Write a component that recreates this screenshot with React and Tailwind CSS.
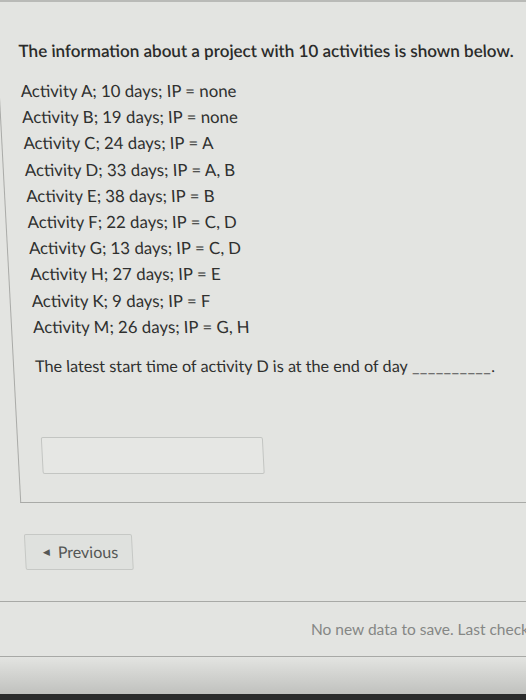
import React from 'react';

const activities = [
  'Activity A; 10 days; IP = none',
  'Activity B; 19 days; IP = none',
  'Activity C; 24 days; IP = A',
  'Activity D; 33 days; IP = A, B',
  'Activity E; 38 days; IP = B',
  'Activity F; 22 days; IP = C, D',
  'Activity G; 13 days; IP = C, D',
  'Activity H; 27 days; IP = E',
  'Activity K; 9 days; IP = F',
  'Activity M; 26 days; IP = G, H',
];

export default function App() {
  return (
    <div
      className="flex flex-col w-[526px] h-[700px] overflow-hidden bg-[#e3e4e1] text-[#2f302f]"
      style={{ fontFamily: 'Lato, "Open Sans", sans-serif' }}
    >
      <div className="h-[2px] shrink-0 bg-[#b9bab7]" />
      {/* photo is taken at a slight angle, so the page leans */}
      <div className="skew-x-3 origin-top-left w-[620px] shrink-0">
        <div className="-ml-[6px] w-[640px] h-[501px] border-l border-b border-[#a9aaa7] pl-[21px] pt-[36px]">
          <h1 className="text-[17px] leading-[26px] font-semibold text-[#2a2b2a]">
            The information about a project with 10 activities is shown below.
          </h1>
          <ul className="mt-[14px]">
            {activities.map((a) => (
              <li key={a} className="text-[16.8px] leading-[26.2px]">
                {a}
              </li>
            ))}
          </ul>
          <p className="mt-[13px] text-[16.2px] leading-[26px]">
            The latest start time of activity D is at the end of day{' '}
            <span className="tracking-[0.5px] text-[#555]">__________</span>.
          </p>
          <div className="mt-[58px] ml-[2px] w-[222px] h-[37px] border border-[#c3c5c2] bg-[#e6e7e4] rounded-[2px]" />
        </div>

        <button className="mt-[31px] -ml-[4px] w-[108px] h-[36px] border border-[#c6c8c5] bg-[#dfe1de] rounded-[2px] flex items-center pl-[17px] gap-[8px] text-[16px] text-[#555755]">
          <span className="text-[9px]">◀</span>
          <span>Previous</span>
        </button>
      </div>

      <footer className="mt-[31px] shrink-0 overflow-hidden">
        <div className="h-[56px] border-t border-b border-[#a8a9a6] flex items-center pl-[311px] pt-[1px]">
          <span className="whitespace-nowrap text-[15.5px] text-[#858785]">No new data to save. Last checked</span>
        </div>
      </footer>
      <div className="flex-1 bg-gradient-to-b from-transparent to-[#c0c1be]" />
      <div className="h-[6px] shrink-0 bg-[#2b2c2c]" />
    </div>
  );
}
